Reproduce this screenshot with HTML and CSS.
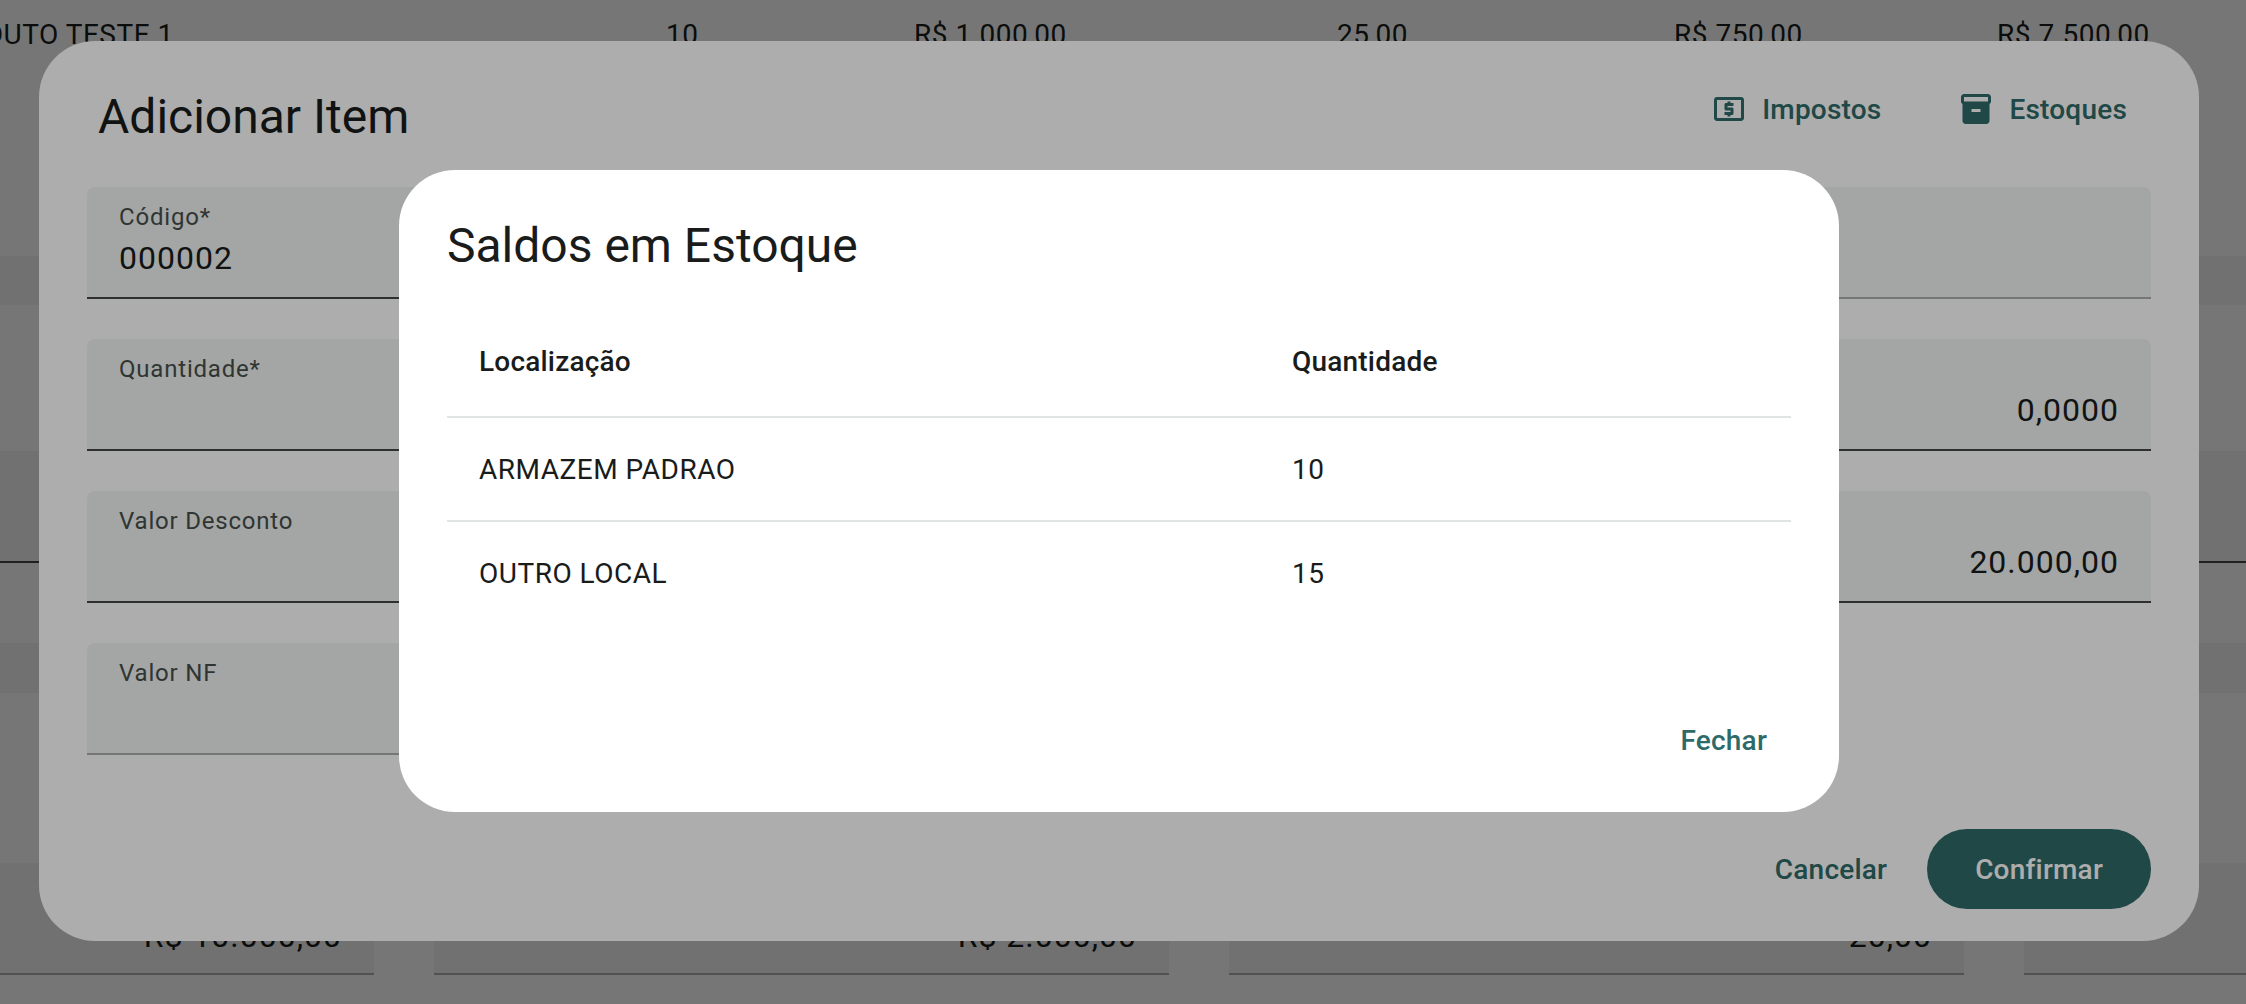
FILE: index.html
```html
<!DOCTYPE html>
<html lang="pt-BR">
<head>
    <meta charset="UTF-8">
    <title>Saldos em Estoque</title>
    <link rel="stylesheet" href="styles.css">
</head>
<body>
    <!-- page behind the dialogs -->
    <div class="page">
        <div class="item-row">
            <span>PRODUTO TESTE 1</span>
            <span>10</span>
            <span>R$ 1.000,00</span>
            <span>25,00</span>
            <span>R$ 750,00</span>
            <span>R$ 7.500,00</span>
        </div>
        <div class="band band-a"></div>
        <div class="page-fields page-fields-a">
            <div class="page-field"></div>
            <div class="page-field"></div>
            <div class="page-field"></div>
            <div class="page-field"></div>
        </div>
        <div class="band band-b"></div>
        <div class="page-fields page-fields-b">
            <div class="page-field">R$ 10.000,00</div>
            <div class="page-field">R$ 2.000,00</div>
            <div class="page-field">20,00</div>
            <div class="page-field"></div>
        </div>
    </div>

    <!-- Adicionar Item -->
    <div class="scrim">
        <div class="modal">
            <div class="modal-head">
                <h2 class="title">Adicionar Item</h2>
                <div class="head-actions">
                    <button class="head-btn">
                        <svg class="icon" viewBox="0 0 24 24"><path d="M11 17h2v-1h1c.55 0 1-.45 1-1v-3c0-.55-.45-1-1-1h-3v-1h4V8h-2V7h-2v1h-1c-.55 0-1 .45-1 1v3c0 .55.45 1 1 1h3v1H9v2h2v1zm9-13H4c-1.11 0-1.99.89-1.99 2L2 18c0 1.11.89 2 2 2h16c1.11 0 2-.89 2-2V6c0-1.11-.89-2-2-2zm0 14H4V6h16v12z"/></svg>
                        Impostos
                    </button>
                    <button class="head-btn">
                        <svg class="icon" viewBox="0 0 24 24"><path d="M20 2H4c-1 0-2 .9-2 2v3.01c0 .72.43 1.34 1 1.69V20c0 1.1 1.1 2 2 2h14c.9 0 2-.9 2-2V8.7c.57-.35 1-.97 1-1.69V4c0-1.1-1-2-2-2zm-5 12H9v-2h6v2zm5-7H4V4l16-.02V7z"/></svg>
                        Estoques
                    </button>
                </div>
            </div>

            <div class="fields">
                <div class="field">
                    <label>Código*</label>
                    <div class="value">000002</div>
                </div>
                <div class="field field-off"></div>

                <div class="field">
                    <label>Quantidade*</label>
                    <div class="value"></div>
                </div>
                <div class="field">
                    <div class="value value-right">0,0000</div>
                </div>

                <div class="field">
                    <label>Valor Desconto</label>
                    <div class="value"></div>
                </div>
                <div class="field">
                    <div class="value value-right">20.000,00</div>
                </div>

                <div class="field field-off">
                    <label>Valor NF</label>
                    <div class="value"></div>
                </div>
            </div>

            <div class="actions">
                <button class="text-btn">Cancelar</button>
                <button class="fill-btn">Confirmar</button>
            </div>
        </div>
    </div>

    <!-- Saldos em Estoque -->
    <div class="scrim">
        <div class="dialog">
            <h2 class="title">Saldos em Estoque</h2>
            <table class="stock">
                <thead>
                    <tr><th class="col-place">Localização</th><th>Quantidade</th></tr>
                </thead>
                <tbody>
                    <tr><td>ARMAZEM PADRAO</td><td>10</td></tr>
                    <tr><td>OUTRO LOCAL</td><td>15</td></tr>
                </tbody>
            </table>
            <div class="dialog-actions">
                <button class="text-btn close-btn">Fechar</button>
            </div>
        </div>
    </div>
</body>
</html>
```

FILE: styles.css
```css
html, body {
    margin: 0;
    height: 100%;
    overflow: hidden;
}

body {
    font-family: Roboto, "Liberation Sans", sans-serif;
    background-color: #fff;
    color: #191c1b;
}

/* Page behind */
.page {
    height: 1004px;
    overflow: hidden;
}
.item-row {
    display: grid;
    grid-template-columns: 737px 248px 423px 337px 323px auto;
    margin-left: -71px;
    height: 256px;
    padding-top: 15px;
    box-sizing: border-box;
    font-size: 28px;
    line-height: 40px;
    letter-spacing: 0.5px;
    white-space: nowrap;
}
.band {
    background-color: #f1f5f3;
}
.band-a {
    height: 49px;
    margin-bottom: 146px;
}
.band-b {
    height: 50px;
    margin-bottom: 170px;
}
.page-fields {
    display: grid;
    grid-template-columns: repeat(4, 735px);
    gap: 60px;
    margin-left: -361px;
    width: 3121px;
}
.page-fields-a {
    margin-bottom: 80px;
}
.page-field {
    height: 112px;
    box-sizing: border-box;
    padding: 49px 32px 0;
    background-color: #f1f5f3;
    border-bottom: 2px solid #adb0af;
    text-align: right;
    font-size: 32px;
    line-height: 48px;
    letter-spacing: 1px;
}
.page-fields-a .page-field {
    border-bottom-color: #444846;
}

/* Dialogs */
.scrim {
    position: fixed;
    top: 0;
    left: 0;
    right: 0;
    bottom: 0;
    display: flex;
    align-items: center;
    justify-content: center;
    padding: 0 8px 22px 0;
    background-color: rgba(0, 0, 0, 0.32);
}
.modal, .dialog {
    display: flex;
    flex-direction: column;
    box-sizing: border-box;
    background-color: #fff;
    border-radius: 56px;
    padding: 48px 48px 32px;
}
.modal {
    width: 2160px;
    height: 900px;
}
.dialog {
    width: 1440px;
    height: 642px;
}
.title {
    margin: 0;
    font-size: 48px;
    font-weight: 400;
    line-height: 56px;
    color: #191c1b;
}

.modal-head {
    display: flex;
    align-items: flex-start;
    justify-content: space-between;
    height: 56px;
    padding-left: 11px;
    margin-bottom: 42px;
}
.head-actions {
    display: flex;
    gap: 29px;
}
.head-btn {
    display: flex;
    align-items: center;
    gap: 15px;
    height: 40px;
    padding: 0 24px;
    border: none;
    background: none;
    font-family: inherit;
    font-size: 28px;
    font-weight: 500;
    letter-spacing: 0.2px;
    color: #2e6a68;
}
.icon {
    width: 36px;
    height: 36px;
    fill: #2e6a68;
}

/* Form fields */
.fields {
    display: grid;
    grid-template-columns: 1fr 1fr;
    gap: 40px;
}
.field {
    height: 112px;
    box-sizing: border-box;
    padding: 14px 32px 0;
    background-color: #f1f5f3;
    border-bottom: 2px solid #444846;
    border-radius: 8px 8px 0 0;
}
.field-off {
    border-bottom-color: #adb0af;
}
.field label {
    display: block;
    height: 33px;
    font-size: 24px;
    line-height: 32px;
    letter-spacing: 0.8px;
    color: #474f4c;
}
.value {
    font-size: 32px;
    line-height: 48px;
    letter-spacing: 1px;
    color: #191c1b;
}
.value-right {
    margin-top: 33px;
    text-align: right;
}

/* Buttons */
.actions {
    display: flex;
    justify-content: flex-end;
    gap: 16px;
    margin-top: auto;
}
.dialog-actions {
    display: flex;
    justify-content: flex-end;
    margin-top: auto;
}
.text-btn, .fill-btn {
    height: 80px;
    padding: 0 24px;
    border: none;
    border-radius: 40px;
    background: none;
    font-family: inherit;
    font-size: 28px;
    font-weight: 500;
    letter-spacing: 0.2px;
    color: #2e6a68;
}
.fill-btn {
    padding: 0 48px;
    background-color: #2e6a68;
    color: #fff;
}

/* Stock table */
.stock {
    width: 100%;
    margin-top: 32px;
    border-collapse: collapse;
    font-size: 28px;
    letter-spacing: 0.5px;
}
.stock th, .stock td {
    padding: 0 32px;
    text-align: left;
}
.stock th {
    height: 110px;
    font-weight: 500;
    letter-spacing: 0.2px;
    border-bottom: 2px solid #e0e4e2;
}
.stock td {
    height: 102px;
    border-bottom: 2px solid transparent;
}
.stock tbody tr:first-child td {
    border-bottom-color: #e0e4e2;
}
.col-place {
    width: 749px;
}
```
